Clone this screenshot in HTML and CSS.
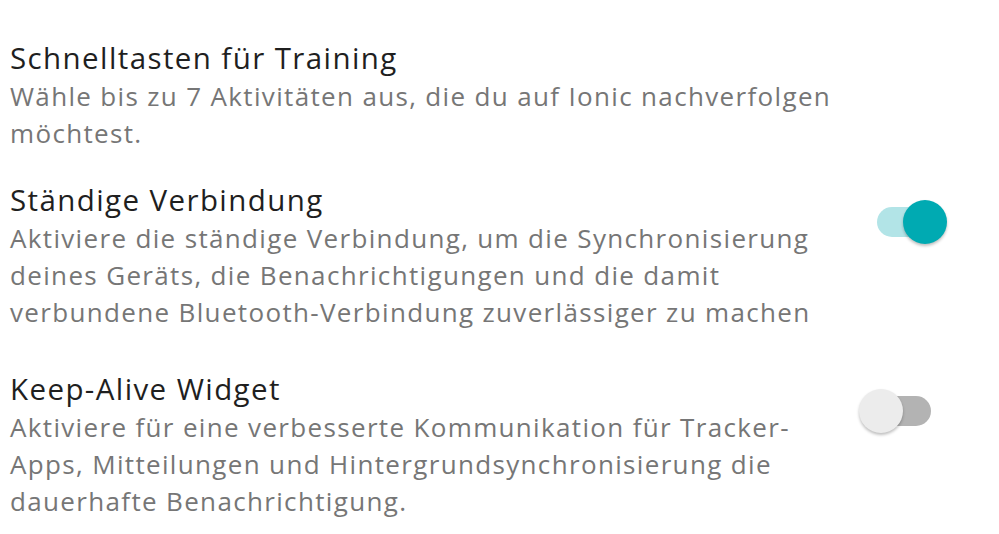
FILE: index.html
```html
<!DOCTYPE html>
<html lang="de">
<head>
<meta charset="utf-8">
<link rel="stylesheet" href="styles.css">
</head>
<body>
<div class="list">
  <div class="item item-first">
    <div class="text">
      <div class="title">Schnelltasten für Training</div>
      <div class="desc">Wähle bis zu 7 Aktivitäten aus, die du auf Ionic nachverfolgen<br>möchtest.</div>
    </div>
  </div>
  <div class="item item-second">
    <div class="text">
      <div class="title">Ständige Verbindung</div>
      <div class="desc">Aktiviere die ständige Verbindung, um die Synchronisierung<br>deines Geräts, die Benachrichtigungen und die damit<br>verbundene Bluetooth-Verbindung zuverlässiger zu machen</div>
    </div>
    <div class="switch on"><span class="track"></span><span class="thumb"></span></div>
  </div>
  <div class="item">
    <div class="text">
      <div class="title">Keep-Alive Widget</div>
      <div class="desc">Aktiviere für eine verbesserte Kommunikation für Tracker-<br>Apps, Mitteilungen und Hintergrundsynchronisierung die<br>dauerhafte Benachrichtigung.</div>
    </div>
    <div class="switch off"><span class="track"></span><span class="thumb"></span></div>
  </div>
</div>
</body>
</html>
```
FILE: styles.css
```css
html, body {
  margin: 0;
  padding: 0;
  background: #ffffff;
}
body {
  font-family: "Open Sans", "Noto Sans", sans-serif;
  width: 999px;
  height: 534px;
  overflow: hidden;
}
.list {
  padding: 38px 0 0 10px;
  display: flex;
  flex-direction: column;
}
.item {
  display: flex;
  justify-content: space-between;
  align-items: flex-start;
}
.item-first { margin-bottom: 28px; }
.item-second { margin-bottom: 38px; }
.title {
  font-size: 29.5px;
  line-height: 40px;
  letter-spacing: 1.4px;
  color: #1f1f1f;
  white-space: nowrap;
}
.desc {
  font-size: 26px;
  line-height: 37px;
  letter-spacing: 1.34px;
  color: #767676;
  white-space: nowrap;
}
.switch {
  position: relative;
  width: 90px;
  height: 44px;
  margin: 20px 50px 0 0;
  flex: none;
}
.track {
  position: absolute;
  left: 18px;
  top: 7px;
  width: 54px;
  height: 30px;
  border-radius: 15px;
}
.thumb {
  position: absolute;
  top: 0;
  width: 44px;
  height: 44px;
  border-radius: 50%;
  box-shadow: 0 2px 3px rgba(0,0,0,0.25);
}
.on .track { background: #b2e4e7; }
.on .thumb { left: 44px; background: #00aab2; }
.off .track { background: #b3b3b3; }
.off .thumb { left: 0; background: #ececec; }
```
